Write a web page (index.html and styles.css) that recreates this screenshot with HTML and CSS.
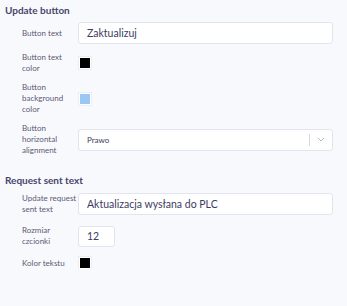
FILE: index.html
```html
<!DOCTYPE html>
<html lang="pl">
<head>
    <meta charset="UTF-8">
    <meta name="viewport" content="width=device-width, initial-scale=1.0">
    <title>Button settings</title>
    <link rel="stylesheet" href="styles.css">
</head>
<body>
    <div class="panel">
        <h2 class="section-title">Update button</h2>
        <div class="fields">
            <label class="field-label">Button text</label>
            <input class="text-input" type="text" value="Zaktualizuj">

            <label class="field-label">Button text color</label>
            <div class="swatch"><span class="swatch-fill black"></span></div>

            <label class="field-label">Button background color</label>
            <div class="swatch"><span class="swatch-fill blue"></span></div>

            <label class="field-label">Button horizontal alignment</label>
            <div class="select-box">
                <span class="select-value">Prawo</span>
                <span class="select-sep"></span>
                <svg class="select-arrow" width="8" height="5" viewBox="0 0 8 5">
                    <path d="M1 1 L4 4 L7 1" fill="none" stroke="#b4b6c2" stroke-width="1"/>
                </svg>
            </div>
        </div>

        <h2 class="section-title second">Request sent text</h2>
        <div class="fields fields-wide">
            <label class="field-label">Update request sent text</label>
            <input class="text-input" type="text" value="Aktualizacja wysłana do PLC">

            <label class="field-label">Rozmiar czcionki</label>
            <input class="text-input number-input" type="text" value="12">

            <label class="field-label">Kolor tekstu</label>
            <div class="swatch"><span class="swatch-fill black"></span></div>
        </div>
    </div>
</body>
</html>
```

FILE: styles.css
```css
body {
    margin: 0;
    background-color: #f8f9fd;
    font-family: Lato, "Noto Sans", sans-serif;
    color: #3d3b5e;
}

.panel {
    padding: 4px 14px 0 5px;
}

.section-title {
    margin: 0 0 6px 0;
    font-size: 10px;
    line-height: 12px;
    font-weight: 700;
    color: #47456b;
}

.section-title.second {
    margin-top: 18px;
    margin-bottom: 7px;
}

.fields {
    display: grid;
    grid-template-columns: 56px 1fr;
    row-gap: 8px;
    align-items: center;
    padding-left: 17px;
}

.fields-wide {
    row-gap: 10px;
}

.field-label {
    font-size: 8px;
    line-height: 11px;
    color: #5d5a74;
}

.text-input {
    box-sizing: border-box;
    height: 22px;
    width: 100%;
    margin: 0;
    padding: 0 8px;
    background-color: #fff;
    border: 1px solid #e2e5ee;
    border-radius: 3px;
    font-family: Lato, "Noto Sans", sans-serif;
    font-size: 10.5px;
    color: #3d3b5e;
    outline: none;
}

.number-input {
    width: 37px;
    height: 21px;
}

.swatch {
    width: 12px;
    height: 12px;
    box-sizing: border-box;
    border: 1px solid #fff;
    box-shadow: 0 0 0 1px #eceef5;
    margin-left: 1px;
}

.swatch-fill {
    display: block;
    width: 100%;
    height: 100%;
}

.swatch-fill.black {
    background-color: #000;
}

.swatch-fill.blue {
    background-color: #9ac7f3;
}

.select-box {
    box-sizing: border-box;
    height: 22px;
    display: flex;
    align-items: center;
    background-color: #fff;
    border: 1px solid #e2e5ee;
    border-radius: 3px;
    padding: 0 7px 0 8px;
}

.select-value {
    flex: 1;
    font-size: 8px;
    color: #3d3b5e;
}

.select-sep {
    width: 1px;
    height: 12px;
    background-color: #d6d8e0;
    margin-right: 7px;
}

.select-arrow {
    display: block;
}
```
